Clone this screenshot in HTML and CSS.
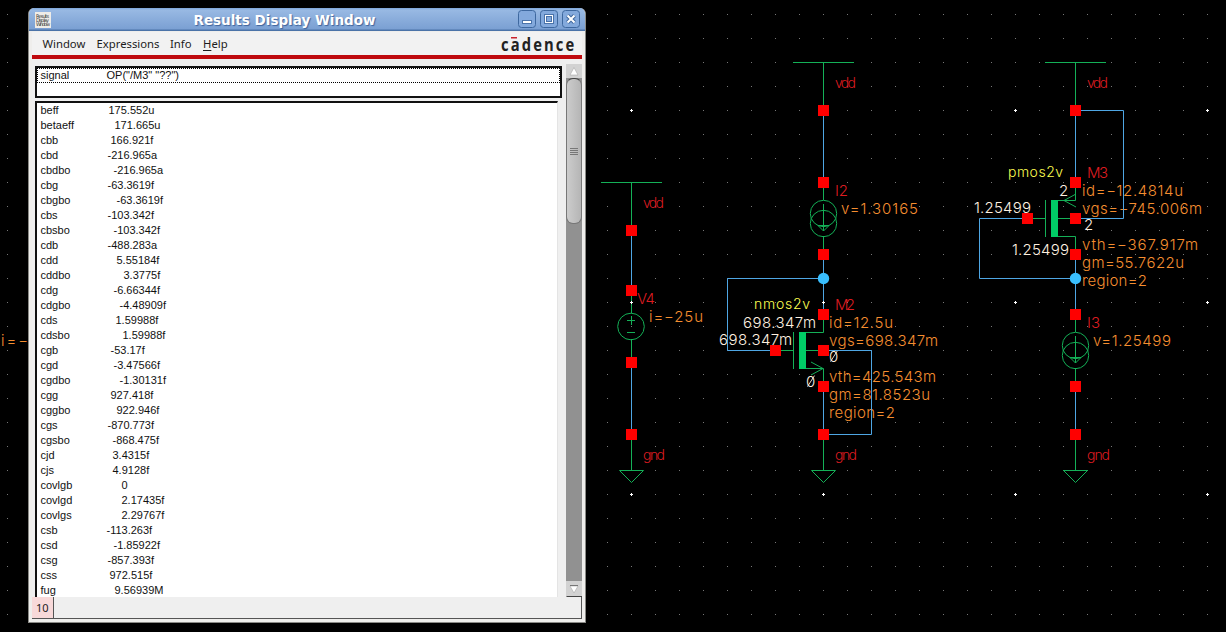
FILE: index.html
```html
<!DOCTYPE html>
<html lang="en">
<head>
<meta charset="utf-8">
<title>Results Display Window</title>
<link rel="stylesheet" href="styles.css">
</head>
<body>
<main class="desktop">
  <svg class="schematic" width="1226" height="632" viewBox="0 0 1226 632">
    <defs>
      <pattern id="grid" x="7" y="14" width="24" height="24" patternUnits="userSpaceOnUse">
        <rect class="dot" width="1" height="1"/>
      </pattern>
      <g id="pin"><rect class="pin" x="-5" y="-5" width="11" height="11"/></g>
      <g id="major"><path class="major" d="M-1 .5h3M.5 -1v3"/></g>
      <g id="vdd"><path class="dev" d="M-30 .5H31M.5 0V48"/></g>
      <g id="gnd"><path class="dev" d="M.5 0V36M-11.5 36.5H12.5L.5 48.5Z"/></g>
      <g id="isrc">
        <path class="dev" d="M.5 0V18M.5 54V72M.5 22V49M-5 43.5H6L.5 49Z"/>
        <circle class="dev" cx=".5" cy="31.5" r="13.2"/>
        <circle class="dev" cx=".5" cy="41.5" r="13.2"/>
      </g>
    </defs>
    <rect width="1226" height="632" fill="url(#grid)"/>
    <use href="#major" x="631" y="110"/><use href="#major" x="1015" y="110"/><use href="#major" x="1207" y="110"/>
    <use href="#major" x="1015" y="302"/><use href="#major" x="1207" y="302"/>
    <use href="#major" x="631" y="494"/><use href="#major" x="823" y="494"/><use href="#major" x="1015" y="494"/><use href="#major" x="1207" y="494"/>

    <g class="labels">
    <g class="red">
      <text x="-6" y="327">1</text>
      <text class="s" x="643" y="207" textLength="21">vdd</text>
      <text x="637" y="303" textLength="18">V4</text>
      <text class="s" x="643" y="459" textLength="22">gnd</text>
      <text class="s" x="835" y="87" textLength="21">vdd</text>
      <text x="835" y="195" textLength="13">I2</text>
      <text x="835" y="309" textLength="20">M2</text>
      <text class="s" x="835" y="459" textLength="22">gnd</text>
      <text class="s" x="1087" y="87" textLength="21">vdd</text>
      <text x="1087" y="177" textLength="21">M3</text>
      <text x="1087" y="327" textLength="13">I3</text>
      <text class="s" x="1087" y="459" textLength="23">gnd</text>
    </g>
    <g class="orange">
      <text x="1" y="345" textLength="27">i=−</text>
      <text x="649" y="321" textLength="54">i=−25u</text>
      <text x="841" y="213" textLength="77">v=1.30165</text>
      <text x="829" y="327" textLength="64">id=12.5u</text>
      <text x="829" y="345" textLength="109">vgs=698.347m</text>
      <text x="829" y="381" textLength="107">vth=425.543m</text>
      <text x="829" y="399" textLength="101">gm=81.8523u</text>
      <text x="829" y="417" textLength="66">region=2</text>
      <text x="1082" y="195" textLength="101">id=−12.4814u</text>
      <text x="1082" y="213" textLength="120">vgs=−745.006m</text>
      <text x="1082" y="249" textLength="116">vth=−367.917m</text>
      <text x="1082" y="267" textLength="102">gm=55.7622u</text>
      <text x="1082" y="285" textLength="65">region=2</text>
      <text x="1093" y="345" textLength="78">v=1.25499</text>
    </g>
    <g class="yellow">
      <text class="s" x="754" y="308" textLength="56">nmos2v</text>
      <text class="s" x="1008" y="176" textLength="55">pmos2v</text>
    </g>
    <g class="cream">
      <text x="743" y="327" textLength="73">698.347m</text>
      <text x="719" y="344" textLength="73">698.347m</text>
      <text x="829" y="361">0</text>
      <text x="806" y="386">0</text>
      <text x="974" y="212" textLength="57">1.25499</text>
      <text x="1012" y="254" textLength="57">1.25499</text>
      <text x="1059" y="195">2</text>
      <text x="1084" y="229">2</text>
    </g>
    <path class="slash" d="M830.5 361L837.5 350M807.5 386L814.5 375"/>
    </g>

    <path class="wire" d="M631.5 230V290M631.5 362V434
      M823.5 110V182M823.5 254V314M823.5 278.5H727.5V350.5H775M823.5 350.5H871.5V434.5H823.5V386
      M1075.5 110V182M1075.5 110.5H1123.5V218.5H1075M1027 218.5H979.5V278.5H1075M1075.5 254V314M1075.5 386V434"/>

    <use href="#vdd" x="631" y="182"/><use href="#vdd" x="823" y="62"/><use href="#vdd" x="1075" y="62"/>
    <use href="#gnd" x="631" y="434"/><use href="#gnd" x="823" y="434"/><use href="#gnd" x="1075" y="434"/>
    <use href="#isrc" x="823" y="182"/><use href="#isrc" x="1075" y="314"/>

    <path class="dev" d="M631.5 290V313M631.5 339V362M627 320.5H635M631.5 316V325M627 332.5H635"/>
    <circle class="dev" cx="631" cy="326.5" r="13.3"/>

    <path class="dev" d="M775 350.5H793M793.5 332V369M806 332.5H823.5V314M806 350.5H823M806 368.5H823.5V386M811 362L823 368.5L811 375"/>
    <rect class="gate" x="799" y="332" width="7" height="37"/>
    <path class="dev" d="M1027 218.5H1045M1045.5 200V237M1058 200.5H1075.5V182M1058 218.5H1075M1058 236.5H1075.5V254M1076 194L1064 200.5L1076 207"/>
    <rect class="gate" x="1051" y="200" width="7" height="37"/>

    <use href="#major" x="631" y="302"/><use href="#major" x="823" y="302"/>
    <use href="#pin" x="631" y="230"/><use href="#pin" x="631" y="290"/><use href="#pin" x="631" y="362"/><use href="#pin" x="631" y="434"/>
    <use href="#pin" x="823" y="110"/><use href="#pin" x="823" y="182"/><use href="#pin" x="823" y="254"/><use href="#pin" x="823" y="314"/>
    <use href="#pin" x="775" y="350"/><use href="#pin" x="823" y="350"/><use href="#pin" x="823" y="386"/><use href="#pin" x="823" y="434"/>
    <use href="#pin" x="1075" y="110"/><use href="#pin" x="1075" y="182"/><use href="#pin" x="1027" y="218"/><use href="#pin" x="1075" y="218"/>
    <use href="#pin" x="1075" y="254"/><use href="#pin" x="1075" y="314"/><use href="#pin" x="1075" y="386"/><use href="#pin" x="1075" y="434"/>
    <circle class="node" cx="823.5" cy="278.5" r="5.7"/><circle class="node" cx="1075.5" cy="278.5" r="5.7"/>
  </svg>

  <section class="window">
    <header class="titlebar">
      <svg class="appicon" width="16" height="16" viewBox="0 0 16 16">
        <rect width="16" height="16" fill="#eeece8"/>
        <text x="1" y="5.6" textLength="13">Results</text>
        <text x="1" y="10" textLength="13">Display</text>
        <text x="1" y="14.4" textLength="14">Window</text>
      </svg>
      <h1 class="title">Results Display Window</h1>
      <div class="controls">
        <svg width="18" height="18" viewBox="0 0 18 18"><rect class="btn" x=".5" y=".5" width="17" height="17" rx="3"/><rect class="glyph" x="4.5" y="10.5" width="9" height="3"/></svg>
        <svg width="18" height="18" viewBox="0 0 18 18"><rect class="btn" x=".5" y=".5" width="17" height="17" rx="3"/><rect class="glyph-o" x="5.5" y="5.5" width="7" height="7"/><rect class="ring" x="4.5" y="4.5" width="9" height="9"/><rect class="ring" x="6.5" y="6.5" width="5" height="5"/></svg>
        <svg width="18" height="18" viewBox="0 0 18 18"><rect class="btn" x=".5" y=".5" width="17" height="17" rx="3"/><path class="cross-edge" d="M5.5 5.5l7 7M12.5 5.5l-7 7"/><path class="cross" d="M5.5 5.5l7 7M12.5 5.5l-7 7"/></svg>
      </div>
    </header>
    <div class="client">
      <nav class="menubar">
        <span class="menu m1">Window</span>
        <span class="menu m2">Expressions</span>
        <span class="menu m3">Info</span>
        <span class="menu m4"><u>H</u>elp</span>
        <svg class="brand" width="80" height="22" viewBox="0 0 80 22">
          <text transform="translate(3 18) scale(.82 1)">cadence</text>
          <rect x="13" y="4" width="6" height="1.5" fill="#c8232c"/>
        </svg>
      </nav>
      <div class="work">
        <div class="panes">
          <div class="query"><div class="focus"><span class="name">signal</span><span>OP("/M3" "??")</span></div></div>
          <div class="list" id="list"></div>
        </div>
        <div class="scroll">
          <svg width="16" height="14" viewBox="0 0 16 14"><rect class="arrowbox" width="16" height="14"/><path class="arrow" d="M8 3.5L12 11H4Z"/></svg>
          <div class="thumb"><i></i><i></i><i></i><i></i></div>
          <div class="trough"></div>
          <svg width="16" height="16" viewBox="0 0 16 16"><rect class="arrowbox" width="16" height="15"/><path class="arrow" d="M4 5H12L8 12Z"/><path d="M4 4.5H12" stroke="#777"/><path d="M1 15.5H16" stroke="#444"/></svg>
        </div>
      </div>
      <footer class="status"><span class="count">10</span></footer>
    </div>
  </section>
</main>
<script src="rows.js"></script>
</body>
</html>
```
FILE: styles.css
```css
* { box-sizing: border-box; }
body { margin: 0; background: #000; overflow: hidden; }
.desktop { position: relative; width: 1226px; height: 632px; background: #000; }

.schematic { display: block; }
.labels { transform: translateY(.6px); }
.schematic text { font: 300 15px Inter, Roboto, sans-serif; }
.schematic text.s { font-size: 14px; }
.dot { fill: #777; }
.major { stroke: #fff; fill: none; }
.pin { fill: #f00; }
.dev { stroke: #14b057; fill: none; }
.gate { fill: #00cc66; }
.wire { stroke: #4ea6e4; fill: none; }
.node { fill: #39bfff; }
.red { fill: #de1c20; }
.orange { fill: #f58e30; }
.yellow { fill: #ffff50; }
.cream { fill: #fff1e0; }
.slash { stroke: #fff1e0; stroke-width: .9; }

.window {
  position: absolute; left: 28px; top: 8px; width: 558px; height: 615px;
  display: flex; flex-direction: column;
  background: #efeeec; border: 1px solid #8a8a86; border-top: 0;
  border-radius: 6px 6px 0 0; overflow: hidden;
}
.titlebar {
  height: 23px; flex: none; display: flex; align-items: center;
  padding: 0 5px 0 6px;
  background: linear-gradient(#7aa3d6, #98b9e3 2px, #7ba0d3 21px, #4b73a8 22px);
}
.appicon text { font: 5px "DejaVu Sans", sans-serif; fill: #333; }
.title {
  flex: 1; margin: 0; text-align: center; padding-left: 0;
  font: bold 13.5px/20px "DejaVu Sans", sans-serif; color: #fff;
  text-shadow: 1px 1px 1px #3e639b;
}
.controls { display: flex; gap: 4px; margin-top: -1px; }
.btn { fill: #83a9dc; stroke: #3e689f; }
.glyph { fill: #fff; stroke: #4a73aa; }
.glyph-o { fill: none; stroke: #fff; stroke-width: 2; }
.ring { fill: none; stroke: #4a73aa; }
.cross-edge { stroke: #41699f; stroke-width: 4; }
.cross { stroke: #fff; stroke-width: 2; }

.client { flex: 1; min-height: 0; margin: 1px 3px 3px; display: flex; flex-direction: column; background: #efefef; }
.menubar {
  height: 27px; flex: none; display: flex; align-items: center;
  background: #f2f2f2; border-bottom: 4px solid #bf0a0e; padding: 1px 4px 0 10.5px;
  font: 11.3px/20px "Noto Sans", sans-serif; color: #1c1c1c;
}
.m1 { width: 54px; }
.m2 { width: 73.5px; }
.m3 { width: 33px; }
.menu u { text-underline-offset: 2px; }
.brand { margin-left: auto; }
.brand text { font: 700 18px "Open Sans", sans-serif; letter-spacing: 2.6px; fill: #222; }

.work { flex: 1; min-height: 0; display: flex; justify-content: space-between; padding-top: 5px; }
.panes { width: 527px; margin-left: 3px; padding-top: 2px; display: flex; flex-direction: column; gap: 3px; }
.query { height: 32px; flex: none; border: 2px solid #111; background: #fff; font: 11px/14px "Liberation Sans", sans-serif; color: #111; }
.focus { height: 15px; display: flex; border: 1px dotted #000; padding-left: 2.5px; line-height: 13px; }
.focus .name { width: 66px; }
.list {
  flex: 1; min-height: 0; width: 523px; overflow: hidden; padding: 0 0 0 3.5px;
  background: #fff; border-left: 2px solid #111; border-top: 2px solid #111; border-right: 1px solid #e4e4e4;
  font: 11px/15px "Liberation Sans", sans-serif; color: #111;
}
.row { display: grid; height: 15px; }
.row span { grid-area: 1 / 1; }

.scroll { width: 16px; display: flex; flex-direction: column; background: #919191; }
.scroll svg { display: block; flex: none; }
.arrowbox { fill: #d2d2d2; }
.arrow { fill: #fff; stroke: #aaa; stroke-width: .6; }
.thumb {
  height: 146px; flex: none; border: 1px solid #777; border-top-color: #444; border-radius: 7px;
  background: linear-gradient(90deg, #ccc, #b5b5b5);
  display: flex; flex-direction: column; align-items: center; justify-content: center; gap: 1px;
}
.thumb i { width: 8px; height: 1px; background: #777; }
.trough { flex: 1; }

.status { height: 22px; flex: none; display: flex; border-bottom: 1px solid #555; border-right: 1px solid #555; padding-top: 0; }
.count { width: 22px; background: #f8d9d9; border-right: 1px solid #555; padding-left: 4px; font: 11px/21px "Noto Sans", sans-serif; color: #222; }
```
FILE: rows.js
```js
// name, value, offset of the value from the left of the row in pixels
const rows = [
  ["beff", "175.552u", 68], ["betaeff", "171.665u", 74], ["cbb", "166.921f", 70],
  ["cbd", "-216.965a", 67], ["cbdbo", "-216.965a", 73], ["cbg", "-63.3619f", 67],
  ["cbgbo", "-63.3619f", 76], ["cbs", "-103.342f", 67], ["cbsbo", "-103.342f", 73],
  ["cdb", "-488.283a", 67], ["cdd", "5.55184f", 76], ["cddbo", "3.3775f", 83],
  ["cdg", "-6.66344f", 73], ["cdgbo", "-4.48909f", 79], ["cds", "1.59988f", 75],
  ["cdsbo", "1.59988f", 82], ["cgb", "-53.17f", 70], ["cgd", "-3.47566f", 73],
  ["cgdbo", "-1.30131f", 79], ["cgg", "927.418f", 70], ["cggbo", "922.946f", 76],
  ["cgs", "-870.773f", 67], ["cgsbo", "-868.475f", 72], ["cjd", "3.4315f", 72],
  ["cjs", "4.9128f", 72], ["covlgb", "0", 81], ["covlgd", "2.17435f", 81],
  ["covlgs", "2.29767f", 81], ["csb", "-113.263f", 66], ["csd", "-1.85922f", 73],
  ["csg", "-857.393f", 67], ["css", "972.515f", 69], ["fug", "9.56939M", 74]
];
const list = document.getElementById("list");
for (const [name, value, offset] of rows) {
  const row = document.createElement("div");
  row.className = "row";
  const n = document.createElement("span");
  n.textContent = name;
  const v = document.createElement("span");
  v.textContent = value;
  v.style.marginLeft = offset + "px";
  row.append(n, v);
  list.append(row);
}
```
